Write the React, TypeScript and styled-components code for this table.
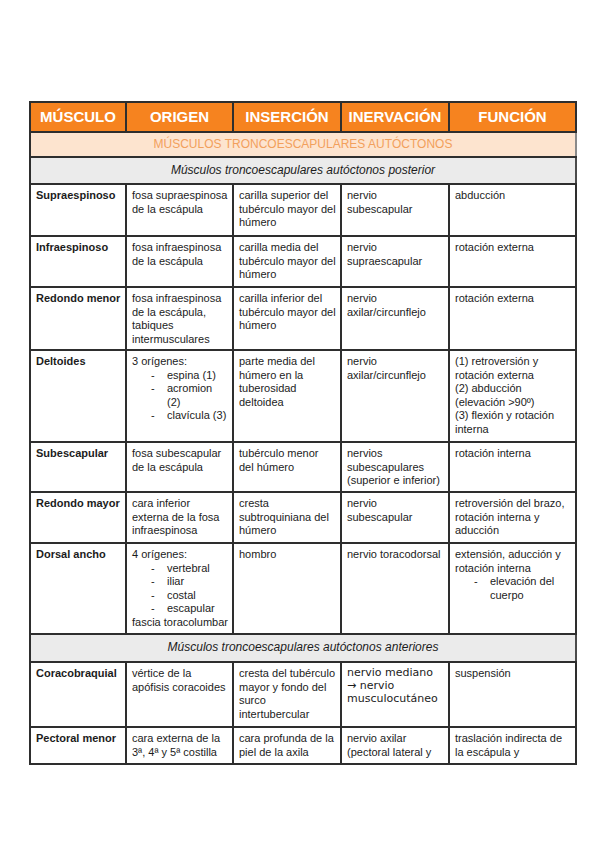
import * as React from 'react'
import styled, { createGlobalStyle } from 'styled-components'

const colors = {
  orange: '#f6831f',
  peach: '#fde4cf',
  peachText: '#f2a05c',
  band: '#ebebeb',
  line: '#2e2e2e',
  frame: '#4a4a4a',
  text: '#1c1c1c',
}

const GlobalStyle = createGlobalStyle`
  html, body {
    margin: 0;
    background: #fff;
  }

  body {
    font-family: 'Liberation Sans', Arial, sans-serif;
  }
`

const Page = styled('main')`
  box-sizing: border-box;
  width: 599px;
  min-height: 848px;
  padding: 101px 0 0 29px;
`

const Table = styled('table')`
  width: 546px;
  table-layout: fixed;
  border-collapse: collapse;
  border: 2px solid ${colors.frame};
  color: ${colors.text};
  font-size: 11px;
  line-height: 13.5px;
`

const HeadCell = styled('th')`
  height: 28px;
  padding: 0;
  border: 2px solid ${colors.line};
  background-color: ${colors.orange};
  color: #fff;
  font-size: 15px;
  font-weight: 700;
  text-align: center;
  vertical-align: middle;
`

const BandCell = styled('td')<{ $tone: 'peach' | 'grey' }>`
  padding: 0;
  border: 2px solid ${colors.line};
  border-right-color: ${(p) => (p.$tone === 'peach' ? '#8a8a8a' : colors.frame)};
  background-color: ${(p) => (p.$tone === 'peach' ? colors.peach : colors.band)};
  color: ${(p) => (p.$tone === 'peach' ? colors.peachText : colors.text)};
  font-size: 12px;
  font-style: ${(p) => (p.$tone === 'grey' ? 'italic' : 'normal')};
  text-align: center;
  vertical-align: middle;
`

const Row = styled('tr')<{ $h: number }>`
  height: ${(p) => p.$h}px;
`

const Cell = styled('td')<{ $bold?: boolean }>`
  padding: 4px 2px 3px 5px;
  border: 2px solid ${colors.line};
  vertical-align: top;
  white-space: nowrap;
  font-weight: ${(p) => (p.$bold ? 700 : 400)};
`

const DashList = styled('ul')`
  margin: 0;
  padding: 0 0 0 19px;
  list-style: none;

  li {
    display: grid;
    grid-template-columns: 16px auto;
  }

  li::before {
    content: '-';
  }
`

const WideFont = styled('span')`
  display: block;
  font-family: 'DejaVu Sans', sans-serif;
  font-size: 11px;
  line-height: 12.8px;
`

const lines = (...parts: string[]) =>
  parts.map((t, i) => (
    <React.Fragment key={i}>
      {i > 0 && <br />}
      {t}
    </React.Fragment>
  ))

const dashes = (items: React.ReactNode[]) => (
  <DashList>
    {items.map((it, i) => (
      <li key={i}>
        <span>{it}</span>
      </li>
    ))}
  </DashList>
)

type Muscle = {
  h: number
  name: string
  cells: React.ReactNode[]
}

const posterior: Muscle[] = [
  {
    h: 52,
    name: 'Supraespinoso',
    cells: [
      lines('fosa supraespinosa', 'de la escápula'),
      lines('carilla superior del', 'tubérculo mayor del', 'húmero'),
      lines('nervio', 'subescapular'),
      'abducción',
    ],
  },
  {
    h: 51,
    name: 'Infraespinoso',
    cells: [
      lines('fosa infraespinosa', 'de la escápula'),
      lines('carilla media del', 'tubérculo mayor del', 'húmero'),
      lines('nervio', 'supraescapular'),
      'rotación externa',
    ],
  },
  {
    h: 63,
    name: 'Redondo menor',
    cells: [
      lines('fosa infraespinosa', 'de la escápula,', 'tabiques', 'intermusculares'),
      lines('carilla inferior del', 'tubérculo mayor del', 'húmero'),
      lines('nervio', 'axilar/circunflejo'),
      'rotación externa',
    ],
  },
  {
    h: 92,
    name: 'Deltoides',
    cells: [
      <>
        3 orígenes:
        {dashes(['espina (1)', lines('acromion', '(2)'), 'clavícula (3)'])}
      </>,
      lines('parte media del', 'húmero en la', 'tuberosidad', 'deltoidea'),
      lines('nervio', 'axilar/circunflejo'),
      lines(
        '(1) retroversión y',
        'rotación externa',
        '(2) abducción',
        '(elevación >90º)',
        '(3) flexión y rotación',
        'interna'
      ),
    ],
  },
  {
    h: 50,
    name: 'Subescapular',
    cells: [
      lines('fosa subescapular', 'de la escápula'),
      lines('tubérculo menor', 'del húmero'),
      lines('nervios', 'subescapulares', '(superior e inferior)'),
      'rotación interna',
    ],
  },
  {
    h: 51,
    name: 'Redondo mayor',
    cells: [
      lines('cara inferior', 'externa de la fosa', 'infraespinosa'),
      lines('cresta', 'subtroquiniana  del', 'húmero'),
      lines('nervio', 'subescapular'),
      lines('retroversión del brazo,', 'rotación interna y', 'aducción'),
    ],
  },
  {
    h: 91,
    name: 'Dorsal ancho',
    cells: [
      <>
        4 orígenes:
        {dashes(['vertebral', 'iliar', 'costal', 'escapular'])}
        fascia toracolumbar
      </>,
      'hombro',
      'nervio toracodorsal',
      <>
        {lines('extensión, aducción y', 'rotación interna')}
        {dashes([lines('elevación del', 'cuerpo')])}
      </>,
    ],
  },
]

const anterior: Muscle[] = [
  {
    h: 65,
    name: 'Coracobraquial',
    cells: [
      lines('vértice de la', 'apófisis coracoides'),
      lines('cresta del tubérculo', 'mayor y fondo del', 'surco', 'intertubercular'),
      <WideFont>{lines('nervio mediano', '→ nervio', 'musculocutáneo')}</WideFont>,
      'suspensión',
    ],
  },
  {
    h: 37,
    name: 'Pectoral menor',
    cells: [
      lines('cara externa de la', '3ª, 4ª y 5ª costilla'),
      lines('cara profunda de la', 'piel de la axila'),
      lines('nervio axilar', '(pectoral lateral y'),
      lines('traslación indirecta de', 'la escápula y'),
    ],
  },
]

const headings = ['MÚSCULO', 'ORIGEN', 'INSERCIÓN', 'INERVACIÓN', 'FUNCIÓN']
const widths = [96, 107, 108, 108, 127]

function MuscleRows({ items }: { items: Muscle[] }) {
  return (
    <>
      {items.map((m) => (
        <Row key={m.name} $h={m.h}>
          <Cell $bold>{m.name}</Cell>
          {m.cells.map((c, i) => (
            <Cell key={i}>{c}</Cell>
          ))}
        </Row>
      ))}
    </>
  )
}

export default function App() {
  return (
    <Page>
      <GlobalStyle />
      <Table>
        <colgroup>
          {widths.map((w, i) => (
            <col key={i} style={{ width: w }} />
          ))}
        </colgroup>
        <thead>
          <tr>
            {headings.map((h) => (
              <HeadCell key={h}>{h}</HeadCell>
            ))}
          </tr>
        </thead>
        <tbody>
          <Row $h={25}>
            <BandCell $tone="peach" colSpan={5}>
              MÚSCULOS TRONCOESCAPULARES AUTÓCTONOS
            </BandCell>
          </Row>
          <Row $h={27}>
            <BandCell $tone="grey" colSpan={5}>
              Músculos troncoescapulares autóctonos posterior
            </BandCell>
          </Row>
          <MuscleRows items={posterior} />
          <Row $h={28}>
            <BandCell $tone="grey" colSpan={5}>
              Músculos troncoescapulares autóctonos anteriores
            </BandCell>
          </Row>
          <MuscleRows items={anterior} />
        </tbody>
      </Table>
    </Page>
  )
}
